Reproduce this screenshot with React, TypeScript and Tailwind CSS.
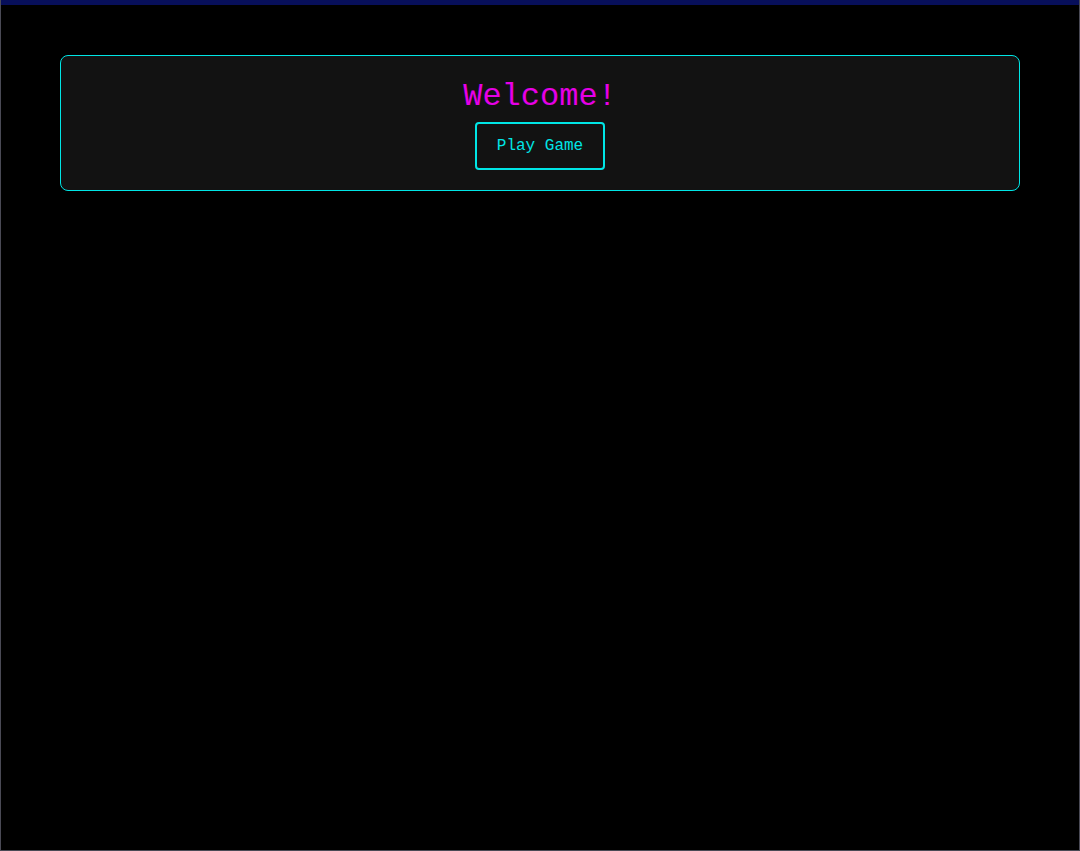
export default function App() {
  return (
    <div className="h-[851px] w-[1080px] flex flex-col bg-black border-x border-b border-[#4a4a55]">
      <div className="h-[5px] bg-[#070f5a] shrink-0" />
      <div className="flex-1 px-[59px] pt-[50px]">
        <div
          className="flex flex-col items-center rounded-lg border border-[#00e5e5] bg-[#121212] pt-[23px] pb-5"
          style={{ fontFamily: '"Liberation Mono", "Courier New", monospace' }}
        >
          <h1 className="text-[32px] leading-[36px] text-[#e600e6]">Welcome!</h1>
          <button className="mt-[7px] rounded-[4px] border-2 border-[#00e5e5] px-5 py-3 text-base leading-5 text-[#00e5e5]">
            Play Game
          </button>
        </div>
      </div>
    </div>
  );
}
